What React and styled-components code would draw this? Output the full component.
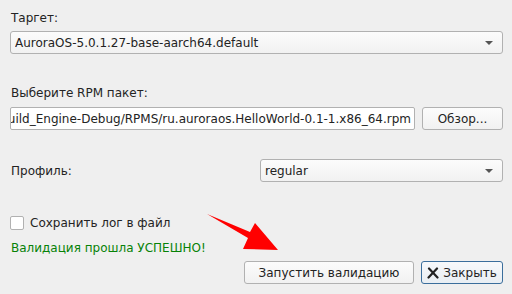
import React from "react";
import styled, { createGlobalStyle } from "styled-components";

const Global = createGlobalStyle`
  html, body { margin: 0; padding: 0; background: #efefef; }
  body { font-family: "DejaVu Sans", "Noto Sans", sans-serif; font-size: 12px; color: #232323; }
`;

const Page = styled.div`
  position: relative;
  width: 512px;
  height: 294px;
  box-sizing: border-box;
  padding: 11px 9px 0 10px;
  display: flex;
  flex-direction: column;
  overflow: hidden;
`;

const Label = styled.div`
  height: 14px;
  line-height: 14px;
  padding-left: 1px;
  margin-top: ${(p) => p.$mt || 0}px;
  color: ${(p) => p.$color || "#232323"};
`;

const Combo = styled.div`
  box-sizing: border-box;
  height: 23px;
  flex: ${(p) => (p.$grow ? "1 1 0" : "none")};
  min-width: 0;
  margin-top: ${(p) => p.$mt || 0}px;
  border: 1px solid #b1b1b1;
  border-radius: 3px;
  background: linear-gradient(#fcfcfc, #f1f1f1);
  display: flex;
  align-items: center;
  padding: 0 8px 0 4px;
  white-space: nowrap;
`;

const ComboText = styled.span`
  flex: 1;
  overflow: hidden;
`;

const Arrow = styled.span`
  width: 0;
  height: 0;
  border-left: 4px solid transparent;
  border-right: 4px solid transparent;
  border-top: 4px solid #555;
  margin-right: 1px;
`;

const Row = styled.div`
  display: flex;
  align-items: center;
  gap: ${(p) => p.$gap || 0}px;
  margin-top: ${(p) => p.$mt || 0}px;
  justify-content: ${(p) => p.$justify || "flex-start"};
`;

const LineEdit = styled.div`
  box-sizing: border-box;
  flex: 1 1 0;
  min-width: 0;
  height: 23px;
  border: 1px solid #b1b1b1;
  border-radius: 2px;
  background: #fff;
  display: flex;
  align-items: center;
  justify-content: flex-end;
  padding: 0 3px;
  overflow: hidden;
  white-space: nowrap;
`;

const Button = styled.button`
  box-sizing: border-box;
  flex: none;
  height: 23px;
  width: ${(p) => p.$w}px;
  font: inherit;
  color: #232323;
  border: 1px solid ${(p) => (p.$focus ? "#3b6e9c" : "#b1b1b1")};
  border-radius: 3px;
  background: ${(p) => (p.$focus ? "linear-gradient(#f7f9fb, #e9eef3)" : "linear-gradient(#fcfcfc, #f1f1f1)")};
  display: flex;
  align-items: center;
  justify-content: center;
  gap: 4px;
  padding: 0;
`;

const ProfileLabel = styled.div`
  flex: none;
  box-sizing: border-box;
  width: 250px;
  padding-left: 1px;
`;

const CheckBox = styled.span`
  box-sizing: border-box;
  flex: none;
  width: 14px;
  height: 14px;
  border: 1px solid #b1b1b1;
  border-radius: 2px;
  background: #fff;
`;

const ArrowOverlay = styled.svg`
  position: absolute;
  left: 0;
  top: 0;
  pointer-events: none;
`;

export default function App() {
  return (
    <>
      <Global />
      <Page>
        <Label>Таргет:</Label>
        <Combo $mt={6}>
          <ComboText>AuroraOS-5.0.1.27-base-aarch64.default</ComboText>
          <Arrow />
        </Combo>
        <Label $mt={32}>Выберите RPM пакет:</Label>
        <Row $mt={7} $gap={7}>
          <LineEdit>uild_Engine-Debug/RPMS/ru.auroraos.HelloWorld-0.1-1.x86_64.rpm</LineEdit>
          <Button $w={81}>Обзор...</Button>
        </Row>
        <Row $mt={29}>
          <ProfileLabel>Профиль:</ProfileLabel>
          <Combo $grow>
            <ComboText>regular</ComboText>
            <Arrow />
          </Combo>
        </Row>
        <Row $mt={34} $gap={6}>
          <CheckBox />
          <span>Сохранить лог в файл</span>
        </Row>
        <Label $mt={11} $color="#078207">Валидация прошла УСПЕШНО!</Label>
        <Row $mt={6} $justify="flex-end" $gap={7}>
          <Button $w={170}>Запустить валидацию</Button>
          <Button $w={82} $focus>
            <svg width="12" height="12" viewBox="0 0 12 12">
              <path d="M2 1.5 L10.5 10.5 M10 1.5 L1.5 10.5" stroke="#222" strokeWidth="2.2" strokeLinecap="round" />
            </svg>
            Закрыть
          </Button>
        </Row>
        <ArrowOverlay width="512" height="294" viewBox="0 0 512 294">
          <polygon points="207,214 250,232 255,223 278,250 243,249 248,238" fill="#ff0000" />
        </ArrowOverlay>
      </Page>
    </>
  );
}
